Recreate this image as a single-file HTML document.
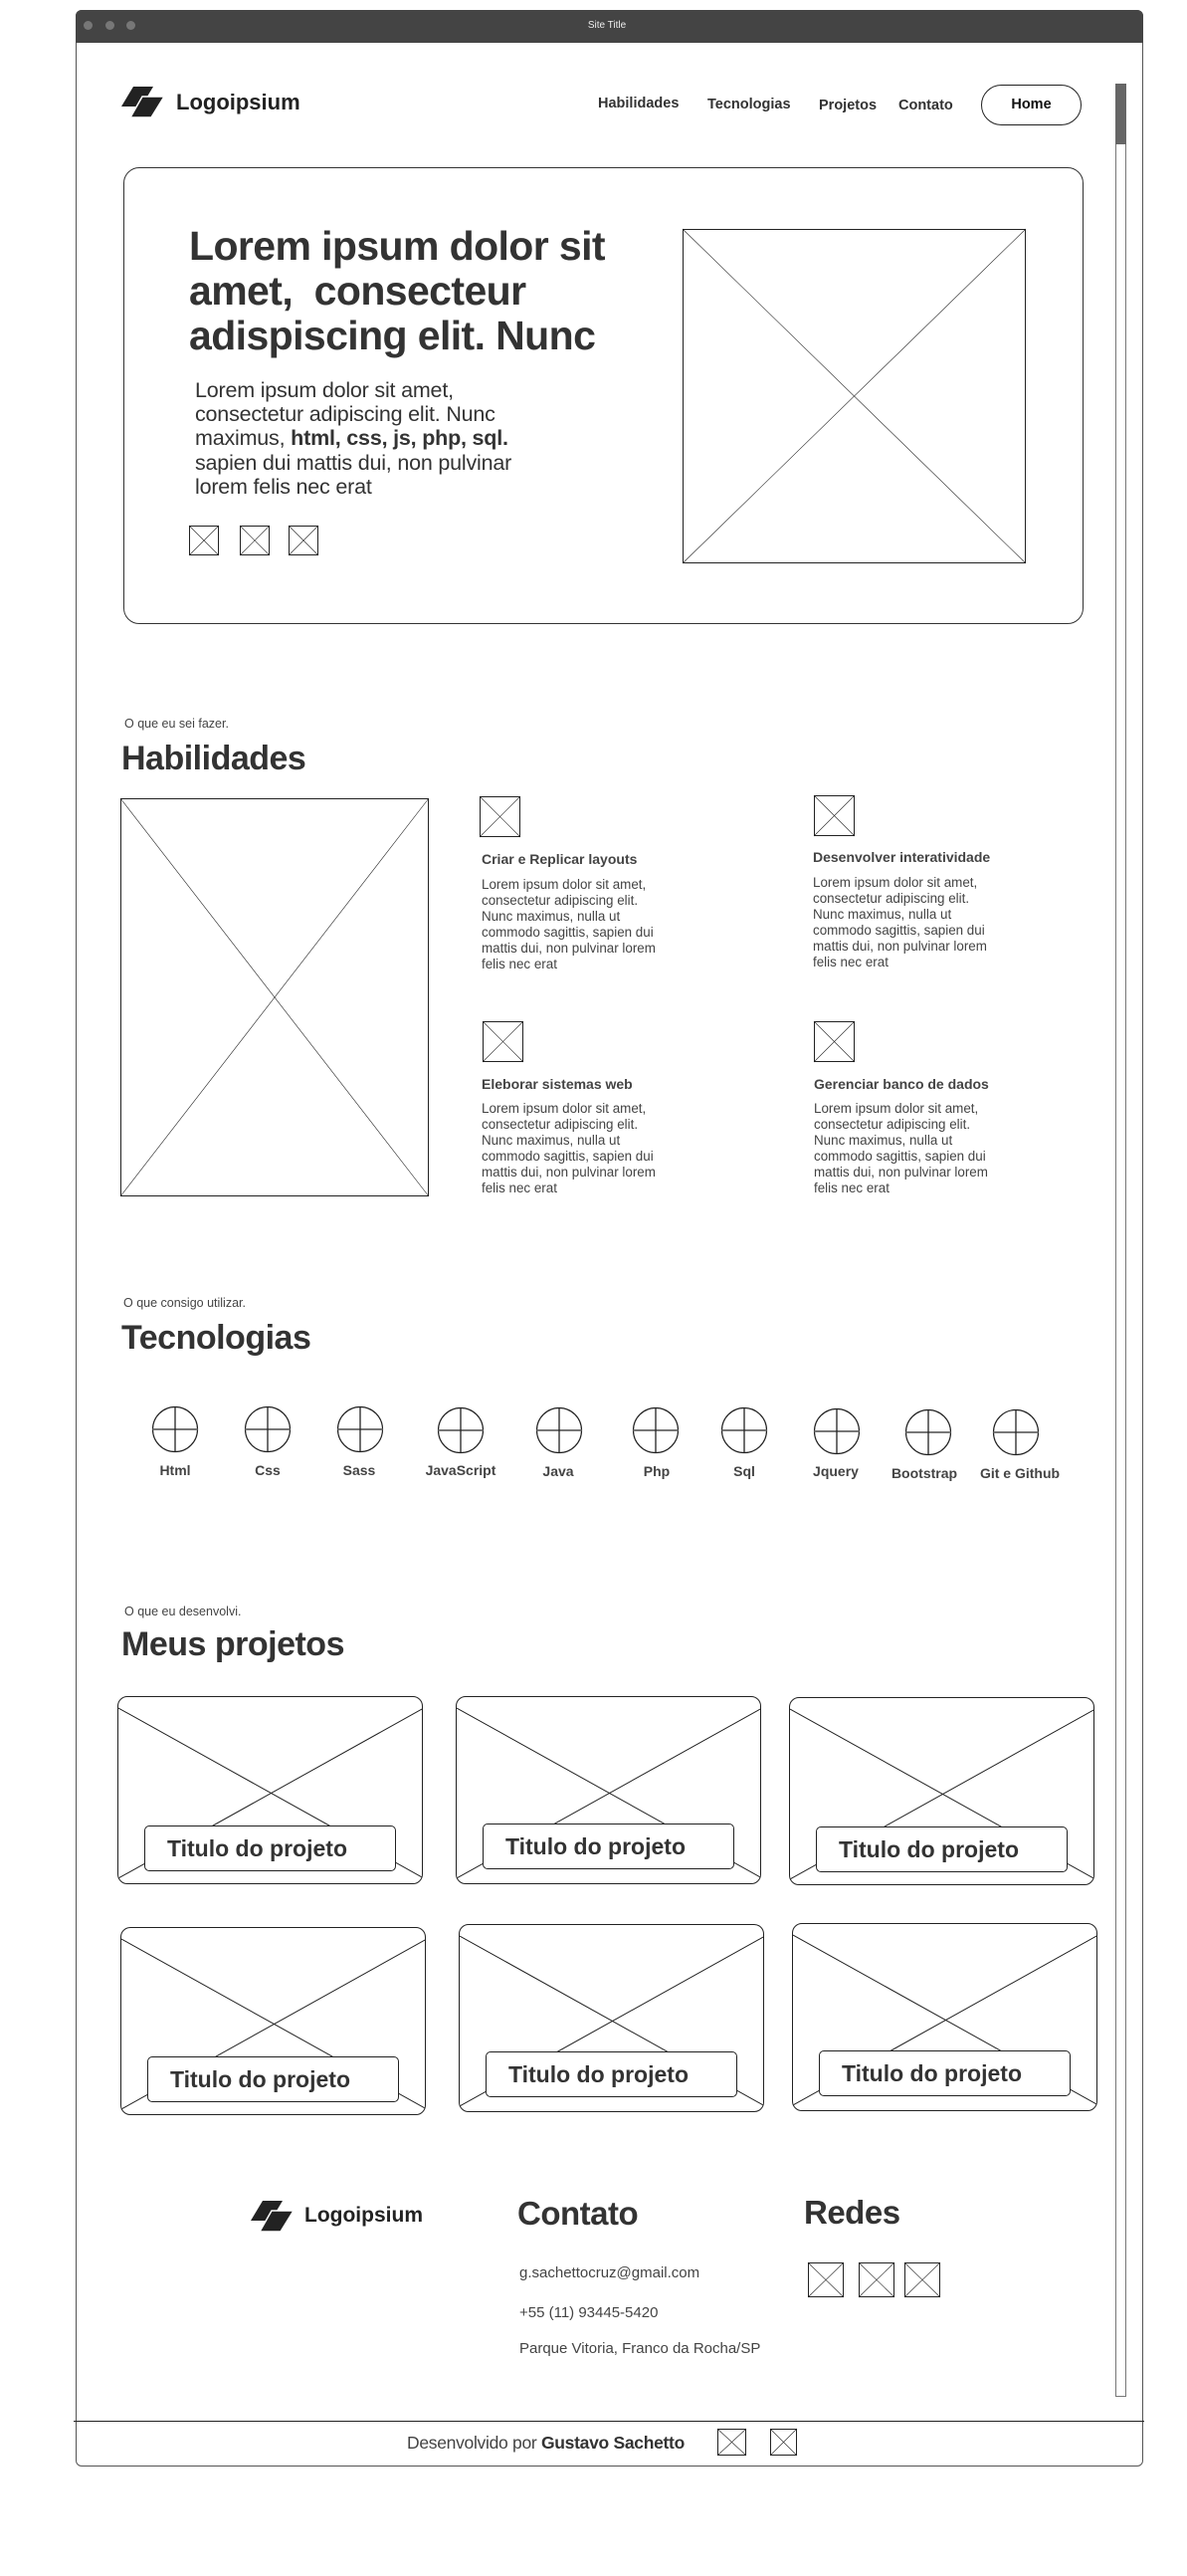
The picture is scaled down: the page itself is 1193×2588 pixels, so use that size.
<!DOCTYPE html>
<html><head><meta charset="utf-8">
<style>
*{margin:0;padding:0;box-sizing:border-box}
body{width:1193px;height:2588px;background:#fff;position:relative;font-family:"Liberation Sans",sans-serif;color:#333;overflow:hidden}
.a{position:absolute}
.t{position:absolute;white-space:nowrap}
svg{position:absolute;overflow:visible}
.nav{font-size:14.5px;font-weight:bold;color:#333}
.small{font-size:12.5px;color:#444}
.h2{font-size:34px;font-weight:bold;letter-spacing:-0.5px}
.st{font-size:14px;font-weight:bold;color:#444}
.sb{font-size:13.4px;line-height:16px;color:#444;white-space:nowrap}
.tl{font-size:14px;font-weight:bold;color:#444;text-align:center;width:100px}
.card{position:absolute;border:1.3px solid #222;border-radius:10px;overflow:hidden;width:307px;height:189px}
.card .tb{position:absolute;left:26px;top:129px;width:253px;height:46px;background:#fff;border:1.3px solid #222;border-radius:5px;font-size:23px;font-weight:bold;padding-left:22px;line-height:44px;color:#333;white-space:nowrap}
</style></head><body>

<!-- browser frame -->
<div class="a" style="left:76px;top:10px;width:1073px;height:2468px;border:1px solid #555;border-radius:6px"></div>
<div class="a" style="left:76px;top:10px;width:1073px;height:33px;background:#444;border-radius:6px 6px 0 0"></div>
<div class="a" style="left:84px;top:21px;width:9px;height:9px;border-radius:50%;background:#777"></div>
<div class="a" style="left:106px;top:21px;width:9px;height:9px;border-radius:50%;background:#777"></div>
<div class="a" style="left:127px;top:21px;width:9px;height:9px;border-radius:50%;background:#777"></div>
<div class="t" style="left:560px;top:20px;width:100px;text-align:center;color:#eee;font-size:10px">Site Title</div>

<!-- scrollbar -->
<div class="a" style="left:1121px;top:84px;width:11px;height:2324px;border:1px solid #777"></div>
<div class="a" style="left:1121px;top:84px;width:11px;height:61px;background:#666"></div>

<!-- header -->
<svg style="left:122px;top:87px" width="44" height="32"><polygon points="12,0 32,0 20,20 0,20" fill="#222"/><polygon points="21,10 43,10 30,31 9,31" fill="#222" stroke="#fff" stroke-width="1.5"/></svg>
<div class="t" style="left:177px;top:90px;font-size:22px;font-weight:bold;color:#222">Logoipsium</div>
<div class="t nav" style="left:601px;top:96px">Habilidades</div>
<div class="t nav" style="left:711px;top:97px">Tecnologias</div>
<div class="t nav" style="left:823px;top:98px">Projetos</div>
<div class="t nav" style="left:903px;top:98px">Contato</div>
<div class="a nav" style="left:986px;top:85px;width:101px;height:41px;border:1.3px solid #222;border-radius:21px;text-align:center;line-height:38px;color:#111">Home</div>

<!-- hero -->
<div class="a" style="left:124px;top:168px;width:965px;height:459px;border:1.3px solid #333;border-radius:16px"></div>
<div class="a" style="left:190px;top:225px;font-size:41px;font-weight:bold;line-height:45px;letter-spacing:-0.6px;color:#333;white-space:nowrap">Lorem ipsum dolor sit<br>amet,&nbsp; consecteur<br>adispiscing elit. Nunc</div>
<div class="a" style="left:196px;top:380px;font-size:21.5px;line-height:24.2px;color:#333;white-space:nowrap;letter-spacing:-0.2px">Lorem ipsum dolor sit amet,<br>consectetur adipiscing elit. Nunc<br>maximus, <b>html, css, js, php, sql.</b><br>sapien dui mattis dui, non pulvinar<br>lorem felis nec erat</div>
<svg style="left:190px;top:528px" width="30" height="30"><rect x=".5" y=".5" width="29" height="29" fill="none" stroke="#222"/><path d="M0 0L30 30M30 0L0 30" stroke="#222" stroke-width=".6"/></svg>
<svg style="left:241px;top:528px" width="30" height="30"><rect x=".5" y=".5" width="29" height="29" fill="none" stroke="#222"/><path d="M0 0L30 30M30 0L0 30" stroke="#222" stroke-width=".6"/></svg>
<svg style="left:290px;top:528px" width="30" height="30"><rect x=".5" y=".5" width="29" height="29" fill="none" stroke="#222"/><path d="M0 0L30 30M30 0L0 30" stroke="#222" stroke-width=".6"/></svg>
<svg style="left:686px;top:230px" width="345" height="336"><rect x=".5" y=".5" width="344" height="335" fill="none" stroke="#222"/><path d="M0 0L345 336M345 0L0 336" stroke="#222" stroke-width=".6"/></svg>

<!-- habilidades -->
<div class="t small" style="left:125px;top:720px">O que eu sei fazer.</div>
<div class="t h2" style="left:122px;top:743px">Habilidades</div>
<svg style="left:121px;top:802px" width="310" height="400"><rect x=".5" y=".5" width="309" height="399" fill="none" stroke="#222"/><path d="M0 0L310 400M310 0L0 400" stroke="#222" stroke-width=".6"/></svg>

<svg style="left:482px;top:800px" width="41" height="41"><rect x=".5" y=".5" width="40" height="40" fill="none" stroke="#222"/><path d="M0 0L41 41M41 0L0 41" stroke="#222" stroke-width=".6"/></svg>
<div class="t st" style="left:484px;top:855px">Criar e Replicar layouts</div>
<div class="a sb" style="left:484px;top:881px">Lorem ipsum dolor sit amet,<br>consectetur adipiscing elit.<br>Nunc maximus, nulla ut<br>commodo sagittis, sapien dui<br>mattis dui, non pulvinar lorem<br>felis nec erat</div>

<svg style="left:818px;top:799px" width="41" height="41"><rect x=".5" y=".5" width="40" height="40" fill="none" stroke="#222"/><path d="M0 0L41 41M41 0L0 41" stroke="#222" stroke-width=".6"/></svg>
<div class="t st" style="left:817px;top:853px">Desenvolver interatividade</div>
<div class="a sb" style="left:817px;top:879px">Lorem ipsum dolor sit amet,<br>consectetur adipiscing elit.<br>Nunc maximus, nulla ut<br>commodo sagittis, sapien dui<br>mattis dui, non pulvinar lorem<br>felis nec erat</div>

<svg style="left:485px;top:1026px" width="41" height="41"><rect x=".5" y=".5" width="40" height="40" fill="none" stroke="#222"/><path d="M0 0L41 41M41 0L0 41" stroke="#222" stroke-width=".6"/></svg>
<div class="t st" style="left:484px;top:1081px">Eleborar sistemas web</div>
<div class="a sb" style="left:484px;top:1106px">Lorem ipsum dolor sit amet,<br>consectetur adipiscing elit.<br>Nunc maximus, nulla ut<br>commodo sagittis, sapien dui<br>mattis dui, non pulvinar lorem<br>felis nec erat</div>

<svg style="left:818px;top:1026px" width="41" height="41"><rect x=".5" y=".5" width="40" height="40" fill="none" stroke="#222"/><path d="M0 0L41 41M41 0L0 41" stroke="#222" stroke-width=".6"/></svg>
<div class="t st" style="left:818px;top:1081px">Gerenciar banco de dados</div>
<div class="a sb" style="left:818px;top:1106px">Lorem ipsum dolor sit amet,<br>consectetur adipiscing elit.<br>Nunc maximus, nulla ut<br>commodo sagittis, sapien dui<br>mattis dui, non pulvinar lorem<br>felis nec erat</div>

<!-- tecnologias -->
<div class="t small" style="left:124px;top:1302px">O que consigo utilizar.</div>
<div class="t h2" style="left:122px;top:1325px">Tecnologias</div>

<svg style="left:0;top:0" width="1193" height="1500">
<defs><g id="c"><circle r="22.5" fill="none" stroke="#222" stroke-width="1.2"/><path d="M-22.5 0H22.5" stroke="#777" stroke-width="2"/><path d="M0 -22.5V22.5" stroke="#222" stroke-width="1.3"/></g></defs>
<use href="#c" x="176" y="1436"/><use href="#c" x="269" y="1436"/><use href="#c" x="362" y="1436"/><use href="#c" x="463" y="1437"/><use href="#c" x="562" y="1437"/><use href="#c" x="659" y="1437"/><use href="#c" x="748" y="1437"/><use href="#c" x="841" y="1438"/><use href="#c" x="933" y="1439"/><use href="#c" x="1021" y="1439"/>
</svg>
<div class="t tl" style="left:126px;top:1469px">Html</div>
<div class="t tl" style="left:219px;top:1469px">Css</div>
<div class="t tl" style="left:311px;top:1469px">Sass</div>
<div class="t tl" style="left:413px;top:1469px">JavaScript</div>
<div class="t tl" style="left:511px;top:1470px">Java</div>
<div class="t tl" style="left:610px;top:1470px">Php</div>
<div class="t tl" style="left:698px;top:1470px">Sql</div>
<div class="t tl" style="left:790px;top:1470px">Jquery</div>
<div class="t tl" style="left:879px;top:1472px">Bootstrap</div>
<div class="t tl" style="left:975px;top:1472px">Git e Github</div>

<!-- projetos -->
<div class="t small" style="left:125px;top:1612px">O que eu desenvolvi.</div>
<div class="t h2" style="left:122px;top:1633px">Meus projetos</div>

<div class="card" style="left:118px;top:1704px"><svg style="left:0;top:0" width="307" height="189"><path d="M0 11L307 182M307 11L0 182" stroke="#222" stroke-width="1"/></svg><div class="tb">Titulo do projeto</div></div>
<div class="card" style="left:458px;top:1704px"><svg style="left:0;top:0" width="307" height="189"><path d="M0 11L307 182M307 11L0 182" stroke="#222" stroke-width="1"/></svg><div class="tb" style="top:127px">Titulo do projeto</div></div>
<div class="card" style="left:793px;top:1705px"><svg style="left:0;top:0" width="307" height="189"><path d="M0 11L307 182M307 11L0 182" stroke="#222" stroke-width="1"/></svg><div class="tb">Titulo do projeto</div></div>

<div class="card" style="left:121px;top:1936px"><svg style="left:0;top:0" width="307" height="189"><path d="M0 11L307 182M307 11L0 182" stroke="#222" stroke-width="1"/></svg><div class="tb">Titulo do projeto</div></div>
<div class="card" style="left:461px;top:1933px"><svg style="left:0;top:0" width="307" height="189"><path d="M0 11L307 182M307 11L0 182" stroke="#222" stroke-width="1"/></svg><div class="tb" style="top:127px">Titulo do projeto</div></div>
<div class="card" style="left:796px;top:1932px"><svg style="left:0;top:0" width="307" height="189"><path d="M0 11L307 182M307 11L0 182" stroke="#222" stroke-width="1"/></svg><div class="tb" style="top:127px">Titulo do projeto</div></div>

<!-- footer -->
<svg style="left:252px;top:2211px" width="44" height="32"><polygon points="12,0 32,0 20,20 0,20" fill="#222"/><polygon points="21,10 43,10 30,31 9,31" fill="#222" stroke="#fff" stroke-width="1.5"/></svg>
<div class="t" style="left:306px;top:2214px;font-size:21px;font-weight:bold;color:#222">Logoipsium</div>
<div class="t" style="left:520px;top:2205px;font-size:33px;font-weight:bold;color:#333;letter-spacing:-0.5px">Contato</div>
<div class="t" style="left:522px;top:2275px;font-size:15px;color:#444">g.sachettocruz@gmail.com</div>
<div class="t" style="left:522px;top:2315px;font-size:15px;color:#444">+55 (11) 93445-5420</div>
<div class="t" style="left:522px;top:2351px;font-size:15px;color:#444">Parque Vitoria, Franco da Rocha/SP</div>
<div class="t" style="left:808px;top:2204px;font-size:33px;font-weight:bold;color:#333;letter-spacing:-0.5px">Redes</div>
<svg style="left:812px;top:2273px" width="36" height="35"><rect x=".5" y=".5" width="35" height="34" fill="none" stroke="#222"/><path d="M0 0L36 35M36 0L0 35" stroke="#222" stroke-width=".6"/></svg>
<svg style="left:863px;top:2273px" width="36" height="35"><rect x=".5" y=".5" width="35" height="34" fill="none" stroke="#222"/><path d="M0 0L36 35M36 0L0 35" stroke="#222" stroke-width=".6"/></svg>
<svg style="left:909px;top:2273px" width="36" height="35"><rect x=".5" y=".5" width="35" height="34" fill="none" stroke="#222"/><path d="M0 0L36 35M36 0L0 35" stroke="#222" stroke-width=".6"/></svg>

<div class="a" style="left:74px;top:2432px;width:1076px;height:1.3px;background:#222"></div>
<div class="t" style="left:409px;top:2444px;font-size:17.5px;color:#444;letter-spacing:-0.3px">Desenvolvido por <b style="color:#333">Gustavo Sachetto</b></div>
<svg style="left:721px;top:2440px" width="29" height="27"><rect x=".5" y=".5" width="28" height="26" fill="none" stroke="#222"/><path d="M0 0L29 27M29 0L0 27" stroke="#222" stroke-width=".6"/></svg>
<svg style="left:774px;top:2440px" width="27" height="27"><rect x=".5" y=".5" width="26" height="26" fill="none" stroke="#222"/><path d="M0 0L27 27M27 0L0 27" stroke="#222" stroke-width=".6"/></svg>

</body></html>
